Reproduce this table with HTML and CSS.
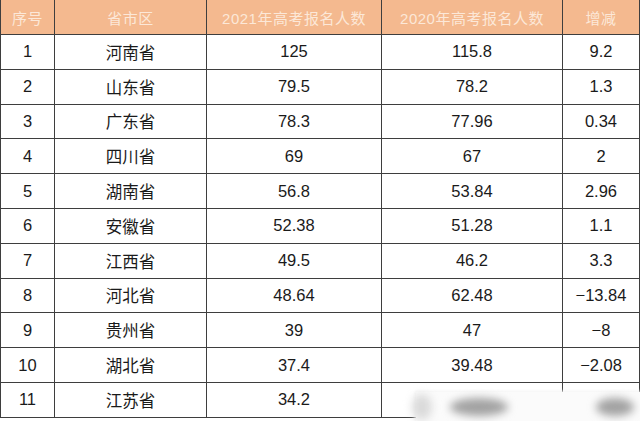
FILE: index.html
```html
<!DOCTYPE html>
<html lang="zh">
<head>
<meta charset="utf-8">
<title>高考报名人数</title>
<link rel="stylesheet" href="styles.css">
</head>
<body>
<div class="sheet">
<table class="grid">
<colgroup>
<col class="c1"><col class="c2"><col class="c3"><col class="c4"><col class="c5">
</colgroup>
<thead>
<tr><th>序号</th><th>省市区</th><th>2021年高考报名人数</th><th>2020年高考报名人数</th><th>增减</th></tr>
</thead>
<tbody>
<tr><td>1</td><td>河南省</td><td>125</td><td>115.8</td><td>9.2</td></tr>
<tr><td>2</td><td>山东省</td><td>79.5</td><td>78.2</td><td>1.3</td></tr>
<tr><td>3</td><td>广东省</td><td>78.3</td><td>77.96</td><td>0.34</td></tr>
<tr><td>4</td><td>四川省</td><td>69</td><td>67</td><td>2</td></tr>
<tr><td>5</td><td>湖南省</td><td>56.8</td><td>53.84</td><td>2.96</td></tr>
<tr><td>6</td><td>安徽省</td><td>52.38</td><td>51.28</td><td>1.1</td></tr>
<tr><td>7</td><td>江西省</td><td>49.5</td><td>46.2</td><td>3.3</td></tr>
<tr><td>8</td><td>河北省</td><td>48.64</td><td>62.48</td><td>−13.84</td></tr>
<tr><td>9</td><td>贵州省</td><td>39</td><td>47</td><td>−8</td></tr>
<tr><td>10</td><td>湖北省</td><td>37.4</td><td>39.48</td><td>−2.08</td></tr>
<tr><td>11</td><td>江苏省</td><td>34.2</td><td></td><td></td></tr>
</tbody>
</table>
<div class="mark">
<span class="blob b1"></span>
<span class="blob b2"></span>
<span class="blob b3"></span>
</div>
</div>
</body>
</html>
```
FILE: styles.css
```css
html, body {
  margin: 0;
  padding: 0;
  background: #ffffff;
}
.sheet {
  position: relative;
  width: 640px;
  height: 421px;
  overflow: hidden;
}
.grid {
  border-collapse: collapse;
  table-layout: fixed;
  width: 639px;
  font-family: "Liberation Sans", "Noto Sans CJK SC", sans-serif;
  font-size: 16.5px;
  color: #1a1a1a;
}
.c1 { width: 54px; }
.c2 { width: 152px; }
.c3 { width: 175px; }
.c4 { width: 181px; }
.c5 { width: 77px; }
.grid th, .grid td {
  border: 1px solid #3e3e3e;
  text-align: center;
  padding: 0;
  white-space: nowrap;
}
.grid thead th {
  border-top: none;
  height: 34px;
  background: #f4b98f;
  color: #fce8d8;
  font-weight: normal;
  font-size: 15px;
  letter-spacing: 0.5px;
}
.grid tbody td {
  height: 33.8px;
}
.mark {
  position: absolute;
  left: 416px;
  top: 392px;
  width: 224px;
  height: 29px;
  background: #fbfbfb;
  box-shadow: 0 0 3px 1px #f4f4f4;
}
.blob {
  position: absolute;
  display: block;
  border-radius: 50%;
  background: #a2a2a2;
  filter: blur(4px);
}
.b1 { left: 34px; top: 6px; width: 58px; height: 18px; }
.b2 { left: 180px; top: 6px; width: 38px; height: 18px; }
.b3 { left: -4px; top: 2px; width: 20px; height: 26px; background: #dadada; }
```
